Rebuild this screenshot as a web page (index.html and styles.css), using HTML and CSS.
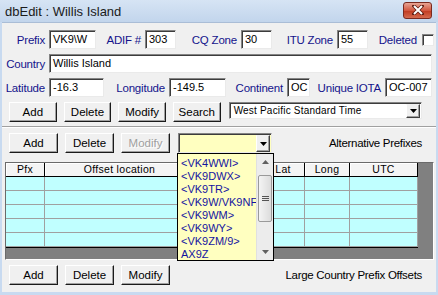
FILE: index.html
```html
<!DOCTYPE html>
<html lang="en">
<head>
  <meta charset="UTF-8">
  <title>dbEdit : Willis Island</title>
  <link rel="stylesheet" href="styles.css">
</head>
<body>
  <div class="window">
    <!-- Title bar -->
    <div class="titlebar">
      <span class="title">dbEdit : Willis Island</span>
      <span class="close-btn">
        <svg width="12" height="10" viewBox="0 0 12 10">
          <path d="M2 1 L10 9 M10 1 L2 9" stroke="#5a1a10" stroke-width="3.4" stroke-linecap="square"/>
          <path d="M2 1 L10 9 M10 1 L2 9" stroke="#fff" stroke-width="2"/>
        </svg>
      </span>
    </div>

    <div class="client">
      <!-- Prefix row -->
      <div class="row">
        <span class="lbl w-prefix">Prefix</span><span class="fld f-prefix">VK9\W</span>
        <span class="lbl w-adif">ADIF #</span><span class="fld f-zone">303</span>
        <span class="lbl w-zone">CQ Zone</span><span class="fld f-zone">30</span>
        <span class="lbl w-zone">ITU Zone</span><span class="fld f-zone">55</span>
        <span class="lbl w-deleted">Deleted</span><span class="check"></span>
      </div>

      <!-- Country row -->
      <div class="row">
        <span class="lbl w-prefix">Country</span><span class="fld f-country">Willis Island</span>
      </div>

      <!-- Position row -->
      <div class="row">
        <span class="lbl w-prefix">Latitude</span><span class="fld f-lat">-16.3</span>
        <span class="lbl w-zone">Longitude</span><span class="fld f-long">-149.5</span>
        <span class="lbl w-cont">Continent</span><span class="fld f-cont">OC</span>
        <span class="lbl w-iota">Unique IOTA</span><span class="fld f-prefix">OC-007</span>
      </div>

      <!-- Country buttons -->
      <div class="btn-row top-btns">
        <span class="btn">Add</span>
        <span class="btn">Delete</span>
        <span class="btn">Modify</span>
        <span class="btn">Search</span>
        <span class="combo tz-combo">
          <span class="combo-text">West Pacific Standard Time</span>
          <span class="combo-arrow">
            <svg width="7" height="4" viewBox="0 0 7 4"><path d="M0 0 H7 L3.5 4 Z" fill="#000"/></svg>
          </span>
        </span>
      </div>

      <div class="separator"></div>

      <!-- Alternative prefixes -->
      <div class="btn-row">
        <span class="btn">Add</span>
        <span class="btn">Delete</span>
        <span class="btn disabled">Modify</span>
        <span class="combo alt-combo">
          <span class="combo-text"></span>
          <span class="combo-arrow">
            <svg width="7" height="4" viewBox="0 0 7 4"><path d="M0 0 H7 L3.5 4 Z" fill="#000"/></svg>
          </span>
        </span>
        <span class="caption">Alternative Prefixes</span>
      </div>

      <!-- Offsets grid -->
      <div class="grid">
        <div class="grid-table">
          <div class="gh">Pfx</div>
          <div class="gh">Offset location</div>
          <div class="gh"></div>
          <div class="gh">Lat</div>
          <div class="gh">Long</div>
          <div class="gh">UTC</div>
          <div class="gc"></div><div class="gc"></div><div class="gc"></div><div class="gc"></div><div class="gc"></div><div class="gc"></div>
          <div class="gc"></div><div class="gc"></div><div class="gc"></div><div class="gc"></div><div class="gc"></div><div class="gc"></div>
          <div class="gc"></div><div class="gc"></div><div class="gc"></div><div class="gc"></div><div class="gc"></div><div class="gc"></div>
          <div class="gc"></div><div class="gc"></div><div class="gc"></div><div class="gc"></div><div class="gc"></div><div class="gc"></div>
          <div class="gc"></div><div class="gc"></div><div class="gc"></div><div class="gc"></div><div class="gc"></div><div class="gc"></div>
        </div>
      </div>

      <!-- Offset buttons -->
      <div class="btn-row bottom-btns">
        <span class="btn">Add</span>
        <span class="btn">Delete</span>
        <span class="btn">Modify</span>
        <span class="caption">Large Country Prefix Offsets</span>
      </div>
    </div>

    <!-- Open dropdown of the alternative prefix combo -->
    <div class="drop-list">
      <div class="drop-items">
        <div>&lt;VK4WWI&gt;</div>
        <div>&lt;VK9DWX&gt;</div>
        <div>&lt;VK9TR&gt;</div>
        <div>&lt;VK9W/VK9NF</div>
        <div>&lt;VK9WM&gt;</div>
        <div>&lt;VK9WY&gt;</div>
        <div>&lt;VK9ZM/9&gt;</div>
        <div>AX9Z</div>
      </div>
      <div class="vscroll">
        <span class="sb-arrow">
          <svg width="7" height="4" viewBox="0 0 7 4"><path d="M0 4 H7 L3.5 0 Z" fill="#606060"/></svg>
        </span>
        <span class="sb-track">
          <span class="sb-thumb">
            <svg width="7" height="6" viewBox="0 0 7 6"><path d="M0 0.5 H7 M0 2.5 H7 M0 4.5 H7" stroke="#555" stroke-width="1"/></svg>
          </span>
        </span>
        <span class="sb-arrow">
          <svg width="7" height="4" viewBox="0 0 7 4"><path d="M0 0 H7 L3.5 4 Z" fill="#606060"/></svg>
        </span>
      </div>
    </div>
  </div>
</body>
</html>
```

FILE: styles.css
```css
body {
  margin: 0;
  font-family: "Liberation Sans", Arial, sans-serif;
  font-size: 11px;
}
.window {
  position: relative;
  width: 438px;
  height: 295px;
  background: #c8daf0;
  display: flex;
  flex-direction: column;
  overflow: hidden;
}
.titlebar {
  height: 22px;
  flex: none;
  display: flex;
  align-items: center;
  justify-content: space-between;
  padding: 0 6px 0 5px;
  background: linear-gradient(#d6e4f4, #c2d5ec);
}
.title {
  font-size: 13px;
  color: #1a1a1a;
}
.close-btn {
  width: 27px;
  height: 15px;
  margin-top: -2px;
  border: 1px solid #7a2a20;
  border-radius: 3px;
  background: linear-gradient(#e8a494, #d2573f 50%, #c0391f 51%, #d46a4e);
  display: flex;
  align-items: center;
  justify-content: center;
}
.client {
  flex: 1;
  margin: 0 2px 3px;
  background: #f0f0f0;
  border-top: 1px solid #aabdd6;
  padding-top: 7px;
}
.row {
  display: flex;
  align-items: center;
  height: 19px;
  margin-bottom: 5px;
}
.lbl {
  color: #14148c;
  text-align: right;
  padding-right: 4px;
  box-sizing: border-box;
  white-space: nowrap;
  font-size: 11.5px;
  letter-spacing: -0.2px;
}
.w-prefix { width: 47px; }
.w-adif { width: 49px; }
.w-zone { width: 65px; }
.w-deleted { width: 53px; }
.w-cont { width: 61px; }
.w-iota { width: 75px; }
.fld {
  height: 19px;
  box-sizing: border-box;
  background: #fff;
  border: 1px solid;
  border-color: #848484 #eaeaea #eaeaea #848484;
  box-shadow: inset 1px 1px 0 #3c3c3c;
  padding: 2px 0 0 3px;
  font-size: 11px;
  color: #000;
  white-space: nowrap;
  overflow: hidden;
}
.f-prefix { width: 47px; }
.f-zone { width: 31px; }
.f-country { width: 383px; }
.f-lat { width: 55px; }
.f-long { width: 57px; }
.f-cont { width: 23px; }
.check {
  width: 12px;
  height: 12px;
  margin-left: 1px;
  box-sizing: border-box;
  background: #fff;
  border: 1px solid;
  border-color: #848484 #eaeaea #eaeaea #848484;
  box-shadow: inset 1px 1px 0 #3c3c3c;
}
.btn-row {
  display: flex;
  align-items: flex-start;
  gap: 7px;
  padding-left: 7px;
  padding-right: 14px;
}
.top-btns { margin-top: 2px; }
.btn {
  width: 49px;
  height: 20px;
  box-sizing: border-box;
  border: 1px solid;
  border-color: #fff #1a1a1a #1a1a1a #fff;
  box-shadow: inset -1px -1px 0 #a0a0a0;
  background: #f0f0f0;
  display: flex;
  align-items: center;
  justify-content: center;
  font-size: 11.5px;
  color: #000;
}
.btn.disabled {
  color: #a0a0a0;
  text-shadow: 1px 1px 0 #fff;
}
.combo {
  height: 17px;
  box-sizing: border-box;
  border: 1px solid;
  border-color: #848484 #eaeaea #eaeaea #848484;
  box-shadow: inset 1px 1px 0 #3c3c3c;
  background: #fff;
  display: flex;
  align-items: stretch;
  padding: 1px 1px 0 1px;
}
.tz-combo {
  width: 199px;
  margin-left: 1px;
}
.alt-combo {
  width: 94px;
  height: 20px;
  margin-left: 1px;
  background: #ffffc0;
}
.combo-text {
  flex: 1;
  padding: 1px 0 0 3px;
  font-size: 10px;
  letter-spacing: 0.2px;
  white-space: nowrap;
}
.combo-arrow {
  width: 14px;
  box-sizing: border-box;
  background: #f0f0f0;
  border: 1px solid;
  border-color: #f0f0f0 #404040 #404040 #fff;
  box-shadow: inset -1px -1px 0 #a0a0a0;
  display: flex;
  align-items: center;
  justify-content: center;
}
.caption {
  margin-left: auto;
  align-self: center;
  font-size: 11.5px;
  letter-spacing: -0.3px;
  color: #000;
}
.separator {
  height: 0;
  margin: 4px 0 5px;
  border-top: 1px solid #a0a0a0;
  border-bottom: 1px solid #fff;
}
.grid {
  margin: 9px 2px 0 3px;
  height: 98px;
  box-sizing: border-box;
  background: #808080;
  border: 1px solid;
  border-color: #6a6a6a #fff #fff #6a6a6a;
}
.grid-table {
  display: grid;
  grid-template-columns: 39px 150px 67px 43px 45px 68px;
  grid-auto-rows: 14px;
  width: 412px;
  box-sizing: border-box;
  border-right: 1px solid #000;
  border-bottom: 1px solid #000;
  background: #c0ffff;
}
.gh {
  background: #f4f4f4;
  border-right: 1px solid #000;
  border-bottom: 1px solid #000;
  box-shadow: inset 1px 1px 0 #fff;
  box-sizing: border-box;
  text-align: center;
  font-size: 10.5px;
  letter-spacing: 0.3px;
  line-height: 13px;
  color: #000;
}
.gc {
  border-right: 1px solid #a0a0a0;
  border-bottom: 1px solid #a0a0a0;
  box-sizing: border-box;
}
.bottom-btns { margin-top: 5px; }
.drop-list {
  position: absolute;
  left: 177px;
  top: 153px;
  width: 97px;
  height: 108px;
  box-sizing: border-box;
  border: 1px solid #000;
  background: #ffffc0;
  display: flex;
}
.drop-items {
  flex: 1;
  padding: 3px 0 0 3px;
  color: #1414a0;
  font-size: 11px;
  line-height: 13px;
  white-space: nowrap;
  overflow: hidden;
}
.vscroll {
  width: 16px;
  display: flex;
  flex-direction: column;
  background: #ececec;
  border-left: 1px solid #e0e0e0;
}
.sb-arrow {
  height: 16px;
  display: flex;
  align-items: center;
  justify-content: center;
}
.sb-track {
  flex: 1;
  padding-top: 5px;
}
.sb-thumb {
  display: flex;
  align-items: center;
  justify-content: center;
  height: 47px;
  margin: 0 1px;
  box-sizing: border-box;
  border: 1px solid #9a9a9a;
  border-radius: 2px;
  background: linear-gradient(90deg, #f4f4f4, #dcdcdc);
}
```
